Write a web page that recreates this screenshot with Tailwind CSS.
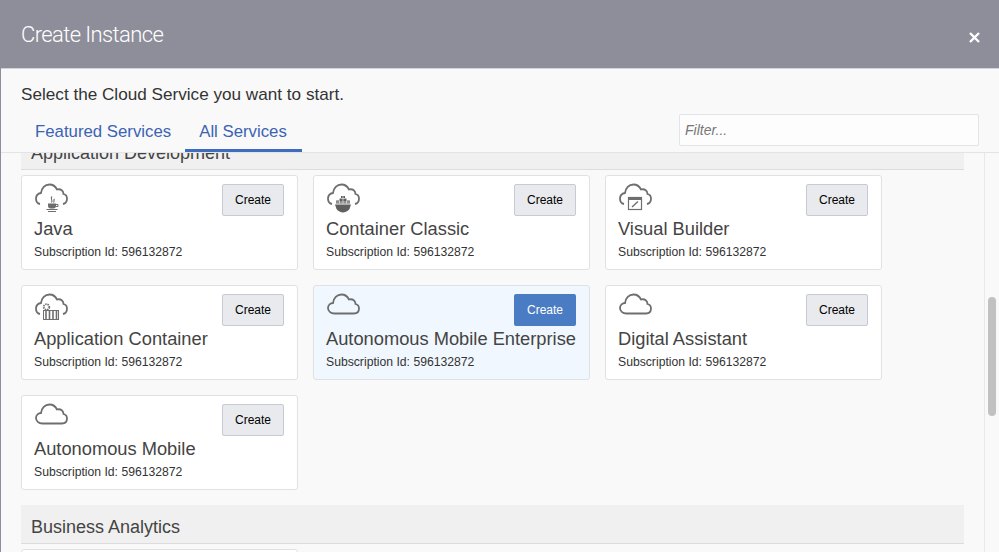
<!DOCTYPE html>
<html lang="en">
<head>
<meta charset="utf-8"/>
<title>Create Instance</title>
<meta content="width=device-width, initial-scale=1.0" name="viewport"/>
<script src="https://cdn.jsdelivr.net/npm/@tailwindcss/browser@4"></script>
</head>
<body class="bg-[#8e8e9a] font-['Liberation_Sans',Arial,sans-serif]">
<div class="h-[552px] w-[999px] overflow-hidden flex flex-col pl-px">

  <header class="h-[68px] shrink-0 flex bg-[#8e8e9a] -ml-px pl-[21px] pr-[19px]">
    <h1 class="flex-1 pt-[21px] text-[22px] leading-[28px] tracking-[-0.6px] font-light text-white font-['Roboto',sans-serif]">Create Instance</h1>
    <button class="pt-[32px] h-fit" aria-label="Close">
      <svg width="11" height="11" viewBox="0 0 11 11" stroke="white" stroke-width="2.4"><path d="M1 1L10 10M10 1L1 10"/></svg>
    </button>
  </header>

  <div class="h-[84px] shrink-0 bg-[#f9f9f9] border-t border-[#cfd4dc] pl-[20px] pr-[20px]">
    <p class="pt-[15px] text-[17.15px] leading-[20px] text-[#333]">Select the Cloud Service you want to start.</p>
    <div class="flex justify-between items-end mt-[10px]">
      <nav class="flex text-[16.8px] leading-[20px] text-[#3b63b3]">
        <a class="px-[14px] pt-[4px] pb-[7px] border-b-[3px] border-transparent">Featured Services</a>
        <a class="pl-[14px] pr-[15px] pt-[4px] pb-[7px] border-b-[3px] border-[#3f6cc0]">All Services</a>
      </nav>
      <input class="w-[300px] h-[32px] mb-[6px] px-[5px] bg-[#fdfdfe] border border-[#e2e4e8] rounded-[2px] text-[14px] italic placeholder:text-[#777] outline-none" placeholder="Filter..."/>
    </div>
  </div>

  <main class="flex-1 min-h-0 flex bg-[#f9f9f9] border-t border-[#e2e4e8] overflow-hidden">
    <div class="w-[983px] pl-[20px] pr-[20px] -mt-[22px]">

      <section>
        <h2 class="h-[39px] pl-[10px] pt-[11px] bg-[#f0f0f0] border-b border-[#dcdcdc] text-[18px] leading-[22px] text-[#444]">Application Development</h2>
        <div class="grid grid-cols-[277px_277px_277px] gap-[15px] mt-[5px]">

          <article class="h-[95px] bg-white border border-[#dfe1e5] rounded-[3px] pl-[12px] pr-[13px] pt-[7px] relative">
            <svg class="block ml-px" width="33" height="30" viewBox="0 0 33 30" fill="none" stroke="#6e6e6e">
              <path stroke-width="1.8" d="M5 21C2.500 20.500 1 18 1 15.500C1 12.500 3.500 10.500 6 10C6.500 5 10 1.500 14.500 1.500C18 1.500 20.500 3.500 22 6.500C26 5.500 28.500 8 28.500 11C30.500 11.500 32 13.500 32 15.500C32 18 30.500 20.500 28 21"/>
              <path stroke-width="1.100" d="M17 13.500C14.500 16 18.500 17 16.500 19.500M19.500 16C18 17.500 20 18 18.500 19.500"/>
              <path fill="#6e6e6e" stroke="none" d="M13 20.500H21V23C21 24.500 20 25.500 18.500 25.500H15.500C14 25.500 13 24.500 13 23Z"/>
              <path stroke-width="1" d="M21 21.500H23V23.500H20.500M11.500 26.500H22.500M13 28.500H21"/>
            </svg>
            <h3 class="mt-[4px] text-[18.3px] leading-[24px] text-[#444]">Java</h3>
            <p class="mt-[3px] text-[12.2px] leading-[16px] text-[#333]">Subscription Id: 596132872</p>
            <button class="absolute top-[8px] right-[13px] w-[62px] h-[32px] bg-[#e8eaed] border border-[#c6cbd3] rounded-[2px] text-[12px] text-black">Create</button>
          </article>

          <article class="h-[95px] bg-white border border-[#dfe1e5] rounded-[3px] pl-[12px] pr-[13px] pt-[7px] relative">
            <svg class="block ml-px" width="33" height="30" viewBox="0 0 33 30" fill="none" stroke="#6e6e6e">
              <path stroke-width="1.8" d="M5 21C2.500 20.500 1 18 1 15.500C1 12.500 3.500 10.500 6 10C6.500 5 10 1.500 14.500 1.500C18 1.500 20.500 3.500 22 6.500C26 5.500 28.500 8 28.500 11C30.500 11.500 32 13.500 32 15.500C32 18 30.500 20.500 28 21"/>
              <path fill="#5f5f5f" stroke="none" d="M9 17.500H12.500V15.500H14V13H18V15.500H19.500V17.500H23V20.500H9ZM8 21.500H24L22.500 26C21 28 18 29.500 16 29.500C14 29.500 11 28 9.500 26Z"/>
              <path stroke="#fff" stroke-width="0.600" d="M9 19H23M14 15.500H18M16 13V20.500M12.500 17.500V20.500M19.500 17.500V20.500"/>
            </svg>
            <h3 class="mt-[4px] text-[18.3px] leading-[24px] text-[#444]">Container Classic</h3>
            <p class="mt-[3px] text-[12.2px] leading-[16px] text-[#333]">Subscription Id: 596132872</p>
            <button class="absolute top-[8px] right-[13px] w-[62px] h-[32px] bg-[#e8eaed] border border-[#c6cbd3] rounded-[2px] text-[12px] text-black">Create</button>
          </article>

          <article class="h-[95px] bg-white border border-[#dfe1e5] rounded-[3px] pl-[12px] pr-[13px] pt-[7px] relative">
            <svg class="block ml-px" width="33" height="30" viewBox="0 0 33 30" fill="none" stroke="#6e6e6e">
              <path stroke-width="1.8" d="M5 21C2.500 20.500 1 18 1 15.500C1 12.500 3.500 10.500 6 10C6.500 5 10 1.500 14.500 1.500C18 1.500 20.500 3.500 22 6.500C26 5.500 28.500 8 28.500 11C30.500 11.500 32 13.500 32 15.500C32 18 30.500 20.500 28 21"/>
              <rect x="9.500" y="14.500" width="13" height="12" fill="#fff" stroke-width="1.200"/>
              <path stroke-width="2" d="M9.500 16H22.500"/>
              <path stroke-width="1.400" d="M13 24L19 18.500"/>
            </svg>
            <h3 class="mt-[4px] text-[18.3px] leading-[24px] text-[#444]">Visual Builder</h3>
            <p class="mt-[3px] text-[12.2px] leading-[16px] text-[#333]">Subscription Id: 596132872</p>
            <button class="absolute top-[8px] right-[13px] w-[62px] h-[32px] bg-[#e8eaed] border border-[#c6cbd3] rounded-[2px] text-[12px] text-black">Create</button>
          </article>

          <article class="h-[95px] bg-white border border-[#dfe1e5] rounded-[3px] pl-[12px] pr-[13px] pt-[7px] relative">
            <svg class="block ml-px" width="33" height="30" viewBox="0 0 33 30" fill="none" stroke="#6e6e6e">
              <path stroke-width="1.8" d="M5 21C2.500 20.500 1 18 1 15.500C1 12.500 3.500 10.500 6 10C6.500 5 10 1.500 14.500 1.500C18 1.500 20.500 3.500 22 6.500C26 5.500 28.500 8 28.500 11C30.500 11.500 32 13.500 32 15.500C32 18 30.500 20.500 28 21"/>
              <circle cx="11.500" cy="14" r="2.800" fill="#fff" stroke-width="1.800" stroke-dasharray="1.500 0.800"/>
              <rect x="8.500" y="17.500" width="15" height="9" fill="#fff" stroke-width="1"/>
              <path stroke-width="1.600" d="M11 18V26M14.500 18V26M18 18V26M21.500 18V26"/>
            </svg>
            <h3 class="mt-[4px] text-[18.3px] leading-[24px] text-[#444]">Application Container</h3>
            <p class="mt-[3px] text-[12.2px] leading-[16px] text-[#333]">Subscription Id: 596132872</p>
            <button class="absolute top-[8px] right-[13px] w-[62px] h-[32px] bg-[#e8eaed] border border-[#c6cbd3] rounded-[2px] text-[12px] text-black">Create</button>
          </article>

          <article class="h-[95px] bg-[#f1f7fe] border border-[#dfe1e5] rounded-[3px] pl-[12px] pr-[13px] pt-[7px] relative">
            <svg class="block ml-px" width="33" height="30" viewBox="0 0 33 30" fill="none" stroke="#6e6e6e">
              <path stroke-width="1.8" d="M7.500 20.500C3.500 20.500 1 18 1 15C1 12 3.500 10 6 10C6.500 5 10 1.500 14.500 1.500C18 1.500 20.500 3.500 22 6.500C26 5.500 28.500 8 28.500 11C30.500 11.500 32 13.500 32 15.500C32 18.500 30 20.500 27 20.500Z"/>
            </svg>
            <h3 class="mt-[4px] text-[18.3px] leading-[24px] text-[#444]">Autonomous Mobile Enterprise</h3>
            <p class="mt-[3px] text-[12.2px] leading-[16px] text-[#333]">Subscription Id: 596132872</p>
            <button class="absolute top-[8px] right-[13px] w-[62px] h-[32px] bg-[#4a7cc4] rounded-[2px] text-[12px] text-white">Create</button>
          </article>

          <article class="h-[95px] bg-white border border-[#dfe1e5] rounded-[3px] pl-[12px] pr-[13px] pt-[7px] relative">
            <svg class="block ml-px" width="33" height="30" viewBox="0 0 33 30" fill="none" stroke="#6e6e6e">
              <path stroke-width="1.8" d="M7.500 20.500C3.500 20.500 1 18 1 15C1 12 3.500 10 6 10C6.500 5 10 1.500 14.500 1.500C18 1.500 20.500 3.500 22 6.500C26 5.500 28.500 8 28.500 11C30.500 11.500 32 13.500 32 15.500C32 18.500 30 20.500 27 20.500Z"/>
            </svg>
            <h3 class="mt-[4px] text-[18.3px] leading-[24px] text-[#444]">Digital Assistant</h3>
            <p class="mt-[3px] text-[12.2px] leading-[16px] text-[#333]">Subscription Id: 596132872</p>
            <button class="absolute top-[8px] right-[13px] w-[62px] h-[32px] bg-[#e8eaed] border border-[#c6cbd3] rounded-[2px] text-[12px] text-black">Create</button>
          </article>

          <article class="h-[95px] bg-white border border-[#dfe1e5] rounded-[3px] pl-[12px] pr-[13px] pt-[7px] relative">
            <svg class="block ml-px" width="33" height="30" viewBox="0 0 33 30" fill="none" stroke="#6e6e6e">
              <path stroke-width="1.8" d="M7.500 20.500C3.500 20.500 1 18 1 15C1 12 3.500 10 6 10C6.500 5 10 1.500 14.500 1.500C18 1.500 20.500 3.500 22 6.500C26 5.500 28.500 8 28.500 11C30.500 11.500 32 13.500 32 15.500C32 18.500 30 20.500 27 20.500Z"/>
            </svg>
            <h3 class="mt-[4px] text-[18.3px] leading-[24px] text-[#444]">Autonomous Mobile</h3>
            <p class="mt-[3px] text-[12.2px] leading-[16px] text-[#333]">Subscription Id: 596132872</p>
            <button class="absolute top-[8px] right-[13px] w-[62px] h-[32px] bg-[#e8eaed] border border-[#c6cbd3] rounded-[2px] text-[12px] text-black">Create</button>
          </article>
        </div>
      </section>

      <section class="mt-[15px]">
        <h2 class="h-[39px] pl-[10px] pt-[11px] bg-[#f0f0f0] border-b border-[#dcdcdc] text-[18px] leading-[22px] text-[#444]">Business Analytics</h2>
        <div class="grid grid-cols-[277px_277px_277px] gap-[15px] mt-[5px]">
          <div class="h-[95px] bg-white border border-[#dfe1e5] rounded-[3px]"></div>
        </div>
      </section>
    </div>

    <aside class="w-[15px] border-l border-[#e8e8e8] pl-[3px] pt-[144px]">
      <div class="w-[8px] h-[119px] bg-[#c1c1c1] rounded-full"></div>
    </aside>
  </main>
</div>
</body>
</html>
